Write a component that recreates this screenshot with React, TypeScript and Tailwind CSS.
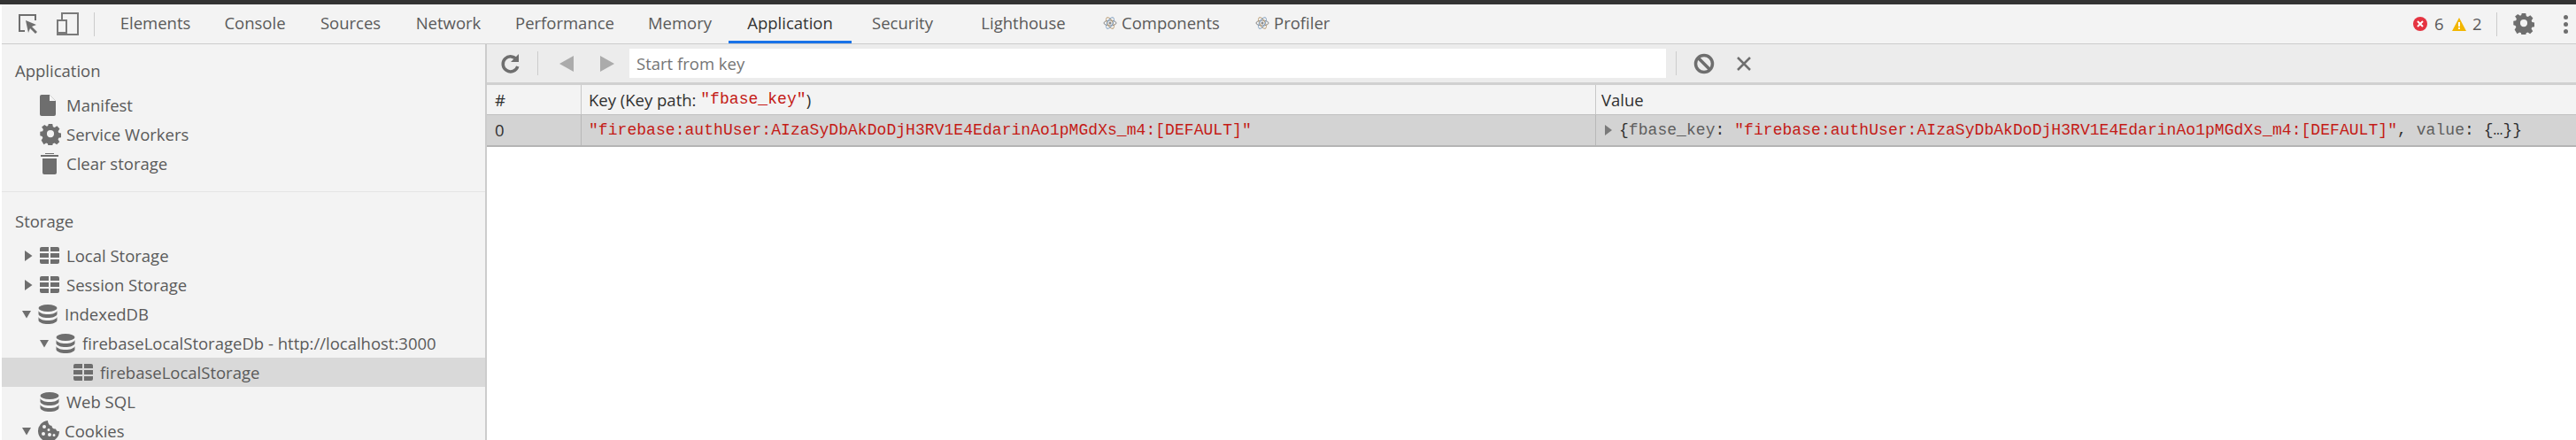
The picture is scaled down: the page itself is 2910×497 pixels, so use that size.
import React from "react";

const G = "#6e6e6e";

function Inspect() {
  return (
    <svg width="24" height="26" viewBox="0 0 24 26" className="shrink-0">
      <path d="M8 21H2V3h18v6" fill="none" stroke={G} strokeWidth="2" />
      <path d="M9 9l12 5-5 2 6 6-2 2-6-6-2 5z" fill={G} />
    </svg>
  );
}
function Device() {
  return (
    <svg width="26" height="28" viewBox="0 0 26 28" className="shrink-0">
      <path d="M7 9V2h18v24H2V10h10v16" fill="none" stroke="#7a7a7a" strokeWidth="2" />
      <path d="M2 23h10v3H2z" fill="#7a7a7a" />
    </svg>
  );
}
function ReactGlyph() {
  return (
    <svg width="16" height="16" viewBox="0 0 16 16" className="shrink-0 mr-[5px]">
      <g fill="none" strokeWidth="1">
        <ellipse cx="8" cy="8" rx="7" ry="3" stroke="#8a8a8a" />
        <ellipse cx="8" cy="8" rx="7" ry="3" stroke="#b89a70" transform="rotate(60 8 8)" />
        <ellipse cx="8" cy="8" rx="7" ry="3" stroke="#7f9fc0" transform="rotate(120 8 8)" />
        <circle cx="8" cy="8" r="1.5" fill="#8a8a8a" />
      </g>
    </svg>
  );
}
function FileIcon() {
  return (
    <svg width="18" height="24" viewBox="0 0 18 24">
      <path d="M2 0h9l7 7v15a2 2 0 0 1-2 2H2a2 2 0 0 1-2-2V2a2 2 0 0 1 2-2z" fill={G} />
      <path d="M11 0v7h7z" fill="#f3f3f3" />
    </svg>
  );
}
function Gear({ size = 24 }: { size?: number }) {
  return (
    <svg width={size} height={size} viewBox="0 0 24 24">
      <path
        fill={G}
        fillRule="evenodd"
        d="M9.5 0h5l.7 3.4 2 .9L20.2 2.4l3.4 3.6-2 3 .8 2 3.2.5v5l-3.3.6-.8 2 1.9 2.9-3.5 3.4-2.9-1.9-2 .8-.7 3.3h-5l-.7-3.3-2-.8-2.9 1.9L.5 20l1.9-2.9-.8-2L-1 14.500v-5l3.2-.6.8-2-2-3L4.500 1l3 1.900 1.400-.6zM12 7.500a4.500 4.500 0 1 0 0 9 4.500 4.500 0 0 0 0-9z"
        transform="translate(1.200 0) scale(.9 .92)"
      />
    </svg>
  );
}
function Trash() {
  return (
    <svg width="22" height="25" viewBox="0 0 22 25">
      <path d="M6 1h10v1H6zM1 3h20v2H1z" fill={G} />
      <path d="M3 7h16v16a2 2 0 0 1-2 2H5a2 2 0 0 1-2-2z" fill={G} />
    </svg>
  );
}
function Grid() {
  return (
    <svg width="22" height="19" viewBox="0 0 22 19" className="shrink-0">
      <path d="M0 2a2 2 0 0 1 2-2h8v5H0zM12 0h8a2 2 0 0 1 2 2v3H12zM0 7h10v5H0zM12 7h10v5H12zM0 14h10v5H2a2 2 0 0 1-2-2zM12 14h10v3a2 2 0 0 1-2 2h-8z" fill={G} />
    </svg>
  );
}
function Db() {
  return (
    <svg width="22" height="22" viewBox="0 0 22 22" className="shrink-0">
      <ellipse cx="11" cy="4" rx="10.500" ry="4" fill={G} />
      <path d="M.5 7c1 2.500 5 4 10.500 4s9.500-1.500 10.500-4v4c-1 2.500-5 4-10.500 4S1.500 13.500.5 11z" fill={G} />
      <path d="M.5 14c1 2.500 5 4 10.500 4s9.500-1.500 10.500-4v4c-1 2.500-5 4-10.500 4S1.500 20.500.5 18z" fill={G} />
    </svg>
  );
}
function Cookie() {
  return (
    <svg width="24" height="24" viewBox="0 0 24 24" className="shrink-0">
      <path
        fill={G}
        fillRule="evenodd"
        d="M11 0a12 12 0 1 0 13 12c-2 .5-3.500-.5-4-2.500-2.500.5-4.500-1-4.500-3.500C13 6 11 3 11 0zM7 5a2 2 0 1 1 0 4 2 2 0 0 1 0-4zm-1 8a2 2 0 1 1 0 4 2 2 0 0 1 0-4zm7 1a2 2 0 1 1 0 4 2 2 0 0 1 0-4zm5 1a1.500 1.500 0 1 1 0 3 1.500 1.500 0 0 1 0-3zM12 9a1.500 1.500 0 1 1 0 3 1.500 1.500 0 0 1 0-3z"
      />
    </svg>
  );
}
function Caret({ open }: { open?: boolean }) {
  return open ? (
    <svg width="10" height="10" viewBox="0 0 10 10" className="shrink-0">
      <path d="M0 1h10L5 9.500z" fill={G} />
    </svg>
  ) : (
    <svg width="10" height="12" viewBox="0 0 10 12" className="shrink-0">
      <path d="M1 0l8.500 6L1 12z" fill={G} />
    </svg>
  );
}

const tabs = [
  ["Elements", 117],
  ["Console", 108],
  ["Sources", 108],
  ["Network", 113],
  ["Performance", 150],
  ["Memory", 110],
  ["Application", 139],
  ["Security", 115],
];

function Tab({ label, w, active }: { label: string; w: number; active?: boolean }) {
  return (
    <div
      className={
        "h-[44px] flex items-center justify-center shrink-0 border-b-[3px] " +
        (active ? "border-[#1a73e8] text-[#333333]" : "border-transparent text-[#5a5a5a]")
      }
      style={{ width: w }}
    >
      {label}
    </div>
  );
}

function SideRow({
  indent,
  caret,
  icon,
  label,
  selected,
}: {
  indent: number;
  caret?: "open" | "closed";
  icon: React.ReactNode;
  label: string;
  selected?: boolean;
}) {
  return (
    <div
      className={"h-[33px] flex items-center shrink-0 " + (selected ? "bg-[#d9d9d9]" : "")}
      style={{ paddingLeft: indent }}
    >
      <div className="w-[18px] flex items-center shrink-0">
        {caret && <Caret open={caret === "open"} />}
      </div>
      <div className="w-[30px] flex items-center shrink-0">{icon}</div>
      <span className="whitespace-nowrap">{label}</span>
    </div>
  );
}

const KEY = '"firebase:authUser:AIzaSyDbAkDoDjH3RV1E4EdarinAo1pMGdXs_m4:[DEFAULT]"';

export default function App() {
  return (
    <div className="w-[2910px] h-[497px] overflow-hidden bg-white flex flex-col font-['Open_Sans','Noto_Sans',sans-serif] text-[18.5px] text-[#5a5a5a]">
      <div className="h-[5px] bg-[#333333] shrink-0" />
      <div className="flex-1 min-h-0 flex flex-col pl-[2px] bg-white">
        <div className="h-[45px] shrink-0 bg-[#f3f3f3] border-b border-[#cccccc] flex items-center">
          <div className="w-[104px] h-[44px] flex items-center shrink-0 pl-[18px] gap-[19px]">
            <Inspect />
            <Device />
          </div>
          <div className="w-px h-[27px] bg-[#cccccc] shrink-0" />
          <div className="w-[10px] shrink-0" />
          {tabs.map(([l, w]) => (
            <Tab key={l as string} label={l as string} w={w as number} active={l === "Application"} />
          ))}
          <div className="w-[11px] shrink-0" />
          <Tab label="Lighthouse" w={136} />
          <div className="h-[44px] w-[193px] shrink-0 flex items-center pl-[22px] border-b-[3px] border-transparent">
            <ReactGlyph />
            Components
          </div>
          <div className="h-[44px] w-[130px] shrink-0 flex items-center pl-[1px] border-b-[3px] border-transparent">
            <ReactGlyph />
            Profiler
          </div>
          <div className="flex-1" />
          <svg width="16" height="16" viewBox="0 0 16 16" className="shrink-0">
            <circle cx="8" cy="8" r="8" fill="#e53340" />
            <path d="M5 5l6 6M11 5l-6 6" stroke="#fff" strokeWidth="2" />
          </svg>
          <span className="ml-[8px] w-[20px]">6</span>
          <svg width="16" height="15" viewBox="0 0 16 15" className="shrink-0">
            <path d="M8 0l8 15H0z" fill="#f2b600" />
            <path d="M7 5h2v5H7zM7 11h2v2H7z" fill="#fff" />
          </svg>
          <span className="ml-[7px] w-[27px]">2</span>
          <div className="w-px h-[27px] bg-[#cccccc] shrink-0" />
          <div className="ml-[18px] flex items-center">
            <Gear />
          </div>
          <div className="ml-[33px] mr-[9px] flex flex-col gap-[3px] w-[5px]">
            <div className="w-[5px] h-[5px] rounded-full bg-[#6e6e6e]" />
            <div className="w-[5px] h-[5px] rounded-full bg-[#6e6e6e]" />
            <div className="w-[5px] h-[5px] rounded-full bg-[#6e6e6e]" />
          </div>
        </div>
        <div className="flex-1 min-h-0 flex">
          <div className="w-[548px] shrink-0 bg-[#f3f3f3] border-r-2 border-[#cccccc] overflow-hidden flex flex-col">
            <div className="h-[167px] shrink-0 border-b border-[#e4e4e4]">
              <div className="h-[50px] pl-[15px] pt-[13px] leading-[33px]">Application</div>
              <div className="pt-[2px]">
                <SideRow indent={25} icon={<FileIcon />} label="Manifest" />
                <SideRow indent={25} icon={<Gear size={24} />} label="Service Workers" />
                <SideRow indent={25} icon={<Trash />} label="Clear storage" />
              </div>
            </div>
            <div className="h-[55px] shrink-0 pl-[15px] pt-[16px] leading-[33px]">Storage</div>
            <SideRow indent={25} caret="closed" icon={<Grid />} label="Local Storage" />
            <SideRow indent={25} caret="closed" icon={<Grid />} label="Session Storage" />
            <SideRow indent={23} caret="open" icon={<Db />} label="IndexedDB" />
            <SideRow indent={43} caret="open" icon={<Db />} label="firebaseLocalStorageDb - http://localhost:3000" />
            <SideRow indent={63} icon={<Grid />} label="firebaseLocalStorage" selected />
            <SideRow indent={25} icon={<Db />} label="Web SQL" />
            <SideRow indent={23} caret="open" icon={<Cookie />} label="Cookies" />
          </div>
          <div className="flex-1 min-w-0 flex flex-col">
            <div className="h-[43px] shrink-0 bg-[#ececec] flex items-center pl-[15px]">
              <svg width="24" height="24" viewBox="0 0 24 24" className="shrink-0">
                <path d="M19 8a8.500 8.500 0 1 0 .8 7" fill="none" stroke={G} strokeWidth="3.500" />
                <path d="M21 1v9h-9z" fill={G} />
              </svg>
              <div className="w-px h-[27px] bg-[#cccccc] ml-[18px]" />
              <svg width="18" height="24" viewBox="0 0 18 24" className="shrink-0 ml-[23px]">
                <path d="M17 3v18L1 12z" fill="#ababab" />
              </svg>
              <svg width="18" height="24" viewBox="0 0 18 24" className="shrink-0 ml-[28px]">
                <path d="M1 3v18l16-9z" fill="#ababab" />
              </svg>
              <div className="ml-[16px] w-[1171px] h-[33px] bg-white flex items-center pl-[8px] text-[#757575]">
                Start from key
              </div>
              <div className="w-px h-[27px] bg-[#cccccc] ml-[11px]" />
              <svg width="24" height="24" viewBox="0 0 24 24" className="shrink-0 ml-[19px]">
                <circle cx="12" cy="12" r="9.500" fill="none" stroke={G} strokeWidth="3.500" />
                <path d="M6 6l12 12" stroke={G} strokeWidth="3.500" />
              </svg>
              <svg width="18" height="18" viewBox="0 0 18 18" className="shrink-0 ml-[24px]">
                <path d="M2 2l14 14M16 2L2 16" stroke={G} strokeWidth="2.500" />
              </svg>
            </div>
            <div className="h-[3px] shrink-0 bg-[#d0d0d0]" />
            <div className="h-[34px] shrink-0 bg-[#f3f3f3] border-b border-[#c0c0c0] flex text-[#303030]">
              <div className="w-[107px] shrink-0 pl-[9px] flex items-center border-r border-[#c8c8c8]">#</div>
              <div className="w-[1146px] shrink-0 pl-[8px] flex items-center border-r border-[#c8c8c8] whitespace-nowrap">
                Key (Key path:&nbsp;<span className="font-['Liberation_Mono',monospace] text-[18px] tracking-[0.05px] text-[#c41a16]">"fbase_key"</span>)
              </div>
              <div className="flex-1 pl-[6px] flex items-center">Value</div>
            </div>
            <div className="h-[36px] shrink-0 bg-[#d3d3d3] border-b-2 border-[#b4b4b4] flex text-[#303030]">
              <div className="w-[107px] shrink-0 pl-[9px] flex items-center border-r border-[#b8b8b8]">0</div>
              <div className="w-[1146px] shrink-0 pl-[8px] flex items-center border-r border-[#b8b8b8] font-['Liberation_Mono',monospace] text-[18px] tracking-[0.05px] text-[#c41a16] whitespace-nowrap">
                {KEY}
              </div>
              <div className="flex-1 pl-[9px] flex items-center font-['Liberation_Mono',monospace] text-[18px] tracking-[0.05px] whitespace-nowrap">
                <svg width="10" height="12" viewBox="0 0 10 12" className="shrink-0 mr-[7px]">
                  <path d="M1 0l8 6-8 6z" fill="#7a7a7a" />
                </svg>
                <span className="text-[#303030]">{"{"}</span>
                <span className="text-[#5e5e5e]">fbase_key</span>
                <span className="text-[#303030]">:&nbsp;</span>
                <span className="text-[#c41a16]">{KEY}</span>
                <span className="text-[#303030]">,&nbsp;</span>
                <span className="text-[#5e5e5e]">value</span>
                <span className="text-[#303030]">:&nbsp;{"{…}}"}</span>
              </div>
            </div>
            <div className="flex-1 bg-white" />
          </div>
        </div>
      </div>
    </div>
  );
}
